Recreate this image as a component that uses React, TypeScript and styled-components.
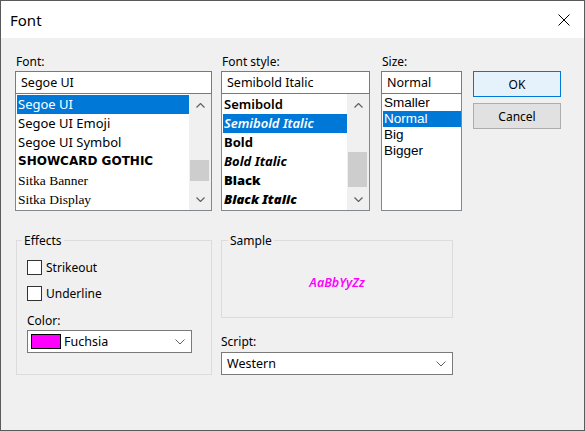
import styled, { createGlobalStyle } from 'styled-components';

const GlobalStyle = createGlobalStyle`
  html, body {
    margin: 0;
    padding: 0;
    background: #f0f0f0;
  }
  body {
    font-family: "Segoe UI", "Noto Sans", sans-serif;
    color: #000;
  }
  * {
    box-sizing: border-box;
  }
`;

const Window = styled.div`
  display: flex;
  flex-direction: column;
  width: 585px;
  height: 431px;
  border: 1px solid #5a5a5a;
  background: #f0f0f0;
`;

const TitleBar = styled.div`
  display: flex;
  align-items: center;
  justify-content: space-between;
  height: 37px;
  padding: 0 14px 0 9px;
  background: #fff;
  flex-shrink: 0;
`;

const Title = styled.span`
  font-size: 15px;
  line-height: 20px;
`;

const Body = styled.div`
  flex: 1;
  padding: 16px 0 0 14px;
`;

const TopRow = styled.div`
  display: flex;
  align-items: flex-start;
`;

const Column = styled.div<{ $w: number; $ml?: number }>`
  display: flex;
  flex-direction: column;
  width: ${({ $w }) => $w}px;
  margin-left: ${({ $ml }) => $ml ?? 0}px;
`;

const Label = styled.div`
  font-size: 12px;
  line-height: 15px;
  height: 15px;
  margin-bottom: 2px;
  padding-left: 1px;
  white-space: nowrap;
`;

const Edit = styled.div`
  height: 23px;
  border: 1px solid #7a7a7a;
  background: #fff;
  font-size: 12.5px;
  line-height: 21px;
  padding: 0 5px;
  white-space: nowrap;
  overflow: hidden;
`;

const ListBox = styled.div`
  display: flex;
  height: 117px;
  border: 1px solid #828790;
  border-top: none;
  background: #fff;
  overflow: hidden;
`;

const ItemList = styled.div`
  flex: 1;
  min-width: 0;
  padding: 1px 0 0 1px;
`;

const Item = styled.div<{
  $selected?: boolean;
  $family?: string;
  $weight?: number;
  $italic?: boolean;
  $size?: number;
  $h?: number;
}>`
  height: ${({ $h }) => $h ?? 19}px;
  line-height: ${({ $h }) => $h ?? 19}px;
  padding: 0 1px;
  white-space: nowrap;
  overflow: hidden;
  font-family: ${({ $family }) => $family ?? '"Segoe UI", "Noto Sans", sans-serif'};
  font-weight: ${({ $weight }) => $weight ?? 400};
  font-style: ${({ $italic }) => ($italic ? 'italic' : 'normal')};
  font-size: ${({ $size }) => $size ?? 13}px;
  background: ${({ $selected }) => ($selected ? '#0078d7' : 'transparent')};
  color: ${({ $selected }) => ($selected ? '#fff' : '#000')};
`;

const Scrollbar = styled.div`
  display: flex;
  flex-direction: column;
  width: 22px;
  flex-shrink: 0;
  background: #f0f0f0;
`;

const ScrollArrow = styled.div`
  height: 22px;
  display: flex;
  align-items: center;
  justify-content: center;
  flex-shrink: 0;
`;

const Track = styled.div`
  flex: 1;
  display: flex;
  flex-direction: column;
`;

const Thumb = styled.div<{ $top: number; $h: number }>`
  margin: ${({ $top }) => $top}px 2px 0 1px;
  height: ${({ $h }) => $h}px;
  background: #cdcdcd;
`;

const ButtonColumn = styled.div`
  display: flex;
  flex-direction: column;
  gap: 6px;
  width: 88px;
  margin-left: 11px;
  padding-top: 17px;
`;

const Button = styled.div<{ $primary?: boolean }>`
  height: 26px;
  display: flex;
  align-items: center;
  justify-content: center;
  font-size: 12px;
  border: 1px solid ${({ $primary }) => ($primary ? '#0078d7' : '#adadad')};
  background: ${({ $primary }) => ($primary ? '#e5f1fb' : '#e1e1e1')};
`;

const BottomRow = styled.div`
  display: flex;
  align-items: flex-start;
  margin-top: 22px;
`;

const Group = styled.fieldset<{ $w: number; $h?: number; $pad: string; $ml?: number }>`
  margin: 0 0 0 ${({ $ml }) => $ml ?? 0}px;
  width: ${({ $w }) => $w}px;
  ${({ $h }) => ($h ? `height: ${$h}px;` : '')}
  padding: ${({ $pad }) => $pad};
  border: 1px solid #dcdcdc;
  min-width: 0;
`;

const Legend = styled.legend<{ $ml: number }>`
  font-size: 12px;
  line-height: 15px;
  padding: 0 2px;
  margin-left: ${({ $ml }) => $ml}px;
`;

const CheckRow = styled.label<{ $mt?: number }>`
  display: flex;
  align-items: center;
  gap: 4px;
  height: 17px;
  margin-top: ${({ $mt }) => $mt ?? 0}px;
  font-size: 12px;
`;

const CheckBox = styled.span`
  width: 15px;
  height: 15px;
  border: 1px solid #333;
  background: #fff;
`;

const FieldLabel = styled.div<{ $mt: number; $mb: number }>`
  font-size: 12px;
  line-height: 15px;
  height: 15px;
  margin-top: ${({ $mt }) => $mt}px;
  margin-bottom: ${({ $mb }) => $mb}px;
`;

const Dropdown = styled.div<{ $w: number }>`
  display: flex;
  align-items: center;
  width: ${({ $w }) => $w}px;
  height: 23px;
  border: 1px solid #7a7a7a;
  background: #fff;
  padding: 0 6px 0 3px;
  font-size: 12.5px;
`;

const DropText = styled.span`
  flex: 1;
  padding-left: 2px;
`;

const Swatch = styled.span<{ $color: string }>`
  width: 30px;
  height: 15px;
  border: 1px solid #000;
  background: ${({ $color }) => $color};
  margin-right: 1px;
`;

const RightColumn = styled.div`
  display: flex;
  flex-direction: column;
  width: 232px;
  margin-left: 9px;
`;

const SampleArea = styled.div`
  height: 69px;
  display: flex;
  align-items: center;
  justify-content: center;
`;

const SampleText = styled.span`
  font-style: italic;
  font-weight: 600;
  font-size: 12.5px;
  color: #f0f;
`;

const Chevron = ({ up }: { up?: boolean }) => (
  <svg width="9" height="5" viewBox="0 0 9 5">
    <polyline
      points={up ? '0.5,4.5 4.5,0.5 8.5,4.5' : '0.5,0.5 4.5,4.5 8.5,0.5'}
      fill="none"
      stroke="#606060"
      strokeWidth="1.2"
    />
  </svg>
);

const DropChevron = () => (
  <svg width="10" height="6" viewBox="0 0 10 6">
    <polyline points="0.5,0.5 5,5 9.5,0.5" fill="none" stroke="#606060" strokeWidth="1" />
  </svg>
);

const CloseIcon = () => (
  <svg width="12" height="12" viewBox="0 0 12 12">
    <path d="M0.5 0.5 L11.5 11.5 M11.5 0.5 L0.5 11.5" stroke="#000" strokeWidth="1" />
  </svg>
);

const fonts = [
  { name: 'Segoe UI', selected: true },
  { name: 'Segoe UI Emoji' },
  { name: 'Segoe UI Symbol' },
  { name: 'SHOWCARD GOTHIC', family: '"DejaVu Sans", sans-serif', weight: 700, size: 12 },
  { name: 'Sitka Banner', family: '"Liberation Serif", serif', size: 13.5 },
  { name: 'Sitka Display', family: '"Liberation Serif", serif', size: 13.5 },
];

const styles = [
  { name: 'Semibold', weight: 600 },
  { name: 'Semibold Italic', weight: 600, italic: true, selected: true },
  { name: 'Bold', weight: 700 },
  { name: 'Bold Italic', weight: 700, italic: true },
  { name: 'Black', weight: 900 },
  { name: 'Black Italic', weight: 900, italic: true },
];

const sizes = ['Smaller', 'Normal', 'Big', 'Bigger'];
const sizeFont = '"Liberation Sans", Arial, sans-serif';

export default function App() {
  return (
    <>
      <GlobalStyle />
      <Window>
        <TitleBar>
          <Title>Font</Title>
          <CloseIcon />
        </TitleBar>
        <Body>
          <TopRow>
            <Column $w={197}>
              <Label>Font:</Label>
              <Edit>Segoe UI</Edit>
              <ListBox>
                <ItemList>
                  {fonts.map((f) => (
                    <Item
                      key={f.name}
                      $selected={f.selected}
                      $family={f.family}
                      $weight={f.weight}
                      $size={f.size}
                    >
                      {f.name}
                    </Item>
                  ))}
                </ItemList>
                <Scrollbar>
                  <ScrollArrow>
                    <Chevron up />
                  </ScrollArrow>
                  <Track>
                    <Thumb $top={44} $h={21} />
                  </Track>
                  <ScrollArrow>
                    <Chevron />
                  </ScrollArrow>
                </Scrollbar>
              </ListBox>
            </Column>

            <Column $w={149} $ml={9}>
              <Label>Font style:</Label>
              <Edit>Semibold Italic</Edit>
              <ListBox>
                <ItemList>
                  {styles.map((s) => (
                    <Item key={s.name} $selected={s.selected} $weight={s.weight} $italic={s.italic}>
                      {s.name}
                    </Item>
                  ))}
                </ItemList>
                <Scrollbar>
                  <ScrollArrow>
                    <Chevron up />
                  </ScrollArrow>
                  <Track>
                    <Thumb $top={36} $h={35} />
                  </Track>
                  <ScrollArrow>
                    <Chevron />
                  </ScrollArrow>
                </Scrollbar>
              </ListBox>
            </Column>

            <Column $w={81} $ml={11}>
              <Label>Size:</Label>
              <Edit>Normal</Edit>
              <ListBox>
                <ItemList>
                  {sizes.map((s) => (
                    <Item key={s} $selected={s === 'Normal'} $h={16} $size={13.5} $family={sizeFont}>
                      {s}
                    </Item>
                  ))}
                </ItemList>
              </ListBox>
            </Column>

            <ButtonColumn>
              <Button $primary>OK</Button>
              <Button>Cancel</Button>
            </ButtonColumn>
          </TopRow>

          <BottomRow>
            <Group $w={196} $h={142} $pad="11px 10px" $ml={1}>
              <Legend $ml={-5}>Effects</Legend>
              <CheckRow>
                <CheckBox />
                Strikeout
              </CheckRow>
              <CheckRow $mt={9}>
                <CheckBox />
                Underline
              </CheckRow>
              <FieldLabel $mt={11} $mb={2}>
                Color:
              </FieldLabel>
              <Dropdown $w={165}>
                <Swatch $color="#ff00ff" />
                <DropText>Fuchsia</DropText>
                <DropChevron />
              </Dropdown>
            </Group>

            <RightColumn>
              <Group $w={232} $pad="0">
                <Legend $ml={6}>Sample</Legend>
                <SampleArea>
                  <SampleText>AaBbYyZz</SampleText>
                </SampleArea>
              </Group>
              <FieldLabel $mt={16} $mb={3}>
                Script:
              </FieldLabel>
              <Dropdown $w={232}>
                <DropText>Western</DropText>
                <DropChevron />
              </Dropdown>
            </RightColumn>
          </BottomRow>
        </Body>
      </Window>
    </>
  );
}
